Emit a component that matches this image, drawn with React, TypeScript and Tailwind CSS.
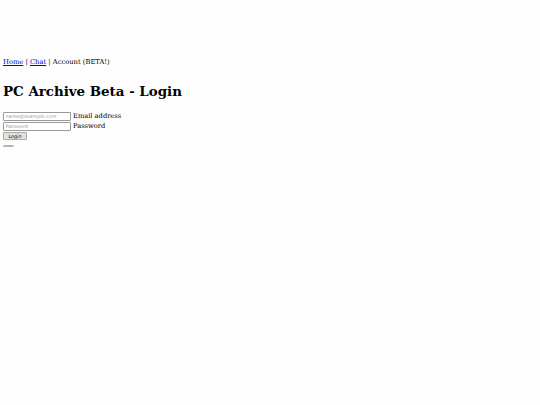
import React from 'react';

export default function App() {
    return (
        <div className="min-h-[405px] bg-[#fdfdfd] px-[3px] pt-[58px] text-black" style={{ fontFamily: '"DejaVu Serif", serif' }}>
            <p className="text-[6.75px] leading-[8px]">
                <a href="#" className="text-[#0000ee] underline">Home</a>
                {' | '}
                <a href="#" className="text-[#0000ee] underline">Chat</a>
                {' | Account (BETA!)'}
            </p>

            <h1 className="mt-[17.5px] text-[13.4px] font-bold leading-[15px]">PC Archive Beta - Login</h1>

            <form className="mt-[13px] flex flex-col items-start gap-[0.5px] text-[6.7px] leading-[8px]" onSubmit={(e) => e.preventDefault()}>
                <div className="flex items-center gap-[2.5px]">
                    <input
                        type="email"
                        placeholder="name@example.com"
                        className="h-[9.5px] w-[67.5px] rounded-[1px] border-[0.5px] border-[#9a9a9a] bg-white px-[1.5px] text-[4.8px] placeholder:text-[#9c9c9c]"
                        style={{ fontFamily: '"DejaVu Sans", sans-serif' }}
                    />
                    <label>Email address</label>
                </div>
                <div className="flex items-center gap-[2.5px]">
                    <input
                        type="password"
                        placeholder="Password"
                        className="h-[9.5px] w-[67.5px] rounded-[1px] border-[0.5px] border-[#9a9a9a] bg-white px-[1.5px] text-[4.8px] placeholder:text-[#9c9c9c]"
                        style={{ fontFamily: '"DejaVu Sans", sans-serif' }}
                    />
                    <label>Password</label>
                </div>
                <button
                    type="submit"
                    className="mt-[0.5px] h-[8px] w-[24px] rounded-[1px] border-[0.5px] border-[#a8a8a8] bg-[#e2e2e2] text-[4.8px] leading-[7px] text-black"
                    style={{ fontFamily: '"DejaVu Sans", sans-serif' }}
                >
                    Login
                </button>
            </form>

            <button type="button" className="mt-[5px] block h-[2px] w-[11px] rounded-[1px] border-[0.5px] border-[#b5b5b5] bg-[#e2e2e2]"></button>
        </div>
    );
}
